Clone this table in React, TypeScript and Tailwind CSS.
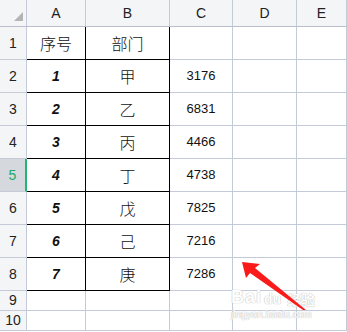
import React from 'react';

const cols = [
  { key: 'A', w: 'w-[59px]' },
  { key: 'B', w: 'w-[84px]' },
  { key: 'C', w: 'w-[63px]' },
  { key: 'D', w: 'w-[64px]' },
  { key: 'E', w: 'flex-1' },
];

const data = [
  ['序号', '部门', ''],
  ['1', '甲', '3176'],
  ['2', '乙', '6831'],
  ['3', '丙', '4466'],
  ['4', '丁', '4738'],
  ['5', '戊', '7825'],
  ['6', '己', '7216'],
  ['7', '庚', '7286'],
];

const grid = 'border-[#c5cad8]';

export default function App() {
  return (
    <div className="relative w-[347px] h-[332px] bg-white overflow-hidden font-['Liberation_Sans','Noto_Sans_CJK_SC',sans-serif] text-[#111]">
      {/* column headers */}
      <div className="flex h-[27px] bg-[#f4f5f7] border-b border-[#b9bfcd]">
        <div className={`w-[27px] border-r ${grid} relative`}>
          <div className="absolute left-[14px] top-[12px] w-0 h-0 border-l-[9px] border-l-transparent border-b-[9px] border-b-[#b4b4b4]" />
        </div>
        {cols.map(c => (
          <div key={c.key} className={`${c.w} border-r ${grid} flex items-center justify-center text-[14px] text-[#222] pt-[1px]`}>
            {c.key}
          </div>
        ))}
      </div>

      {/* data rows */}
      {Array.from({ length: 10 }).map((_, i) => {
        const row = data[i];
        const inTable = i < 8;
        const selected = i === 4;
        return (
          <div key={i} className={`flex ${inTable ? 'h-[33px]' : 'h-[20px]'}`}>
            <div
              className={`w-[27px] flex items-center justify-center text-[14px] border-b ${grid} ${
                selected
                  ? 'bg-[#d5d8dd] text-[#21a86a] border-r-2 border-r-[#21b573]'
                  : 'bg-[#f4f5f7] text-[#222] border-r'
              }`}
            >
              {i + 1}
            </div>
            <div
              className={`w-[59px] flex items-center justify-center ${
                inTable ? 'border-r border-b border-black' : `border-r border-b ${grid}`
              } ${i === 0 ? "text-[16px] font-['Noto_Sans_CJK_SC',sans-serif] font-light" : 'text-[14px] font-bold italic'}`}
            >
              {row ? row[0] : ''}
            </div>
            <div
              className={`w-[84px] flex items-center justify-center text-[16px] font-['Noto_Sans_CJK_SC',sans-serif] font-light ${
                inTable ? 'border-r border-b border-black' : `border-r border-b ${grid}`
              }`}
            >
              {row ? row[1] : ''}
            </div>
            <div className={`w-[63px] flex items-center justify-center text-[13px] border-r border-b ${grid}`}>
              {row ? row[2] : ''}
            </div>
            <div className={`w-[64px] border-r border-b ${grid}`} />
            <div className={`flex-1 border-r border-b ${grid}`} />
          </div>
        );
      })}

      {/* watermark */}
      <div className="absolute left-[231px] top-[288px] text-white font-['Liberation_Sans',sans-serif] font-bold leading-none [text-shadow:0_0_1px_#bdbdbd,0_0_1px_#bdbdbd]">
        <div className="flex items-end">
          <span className="text-[18px] tracking-[1px]">Bai</span>
          <span className="text-[14px] ml-[2px]">du</span>
          <span className="text-[14px] font-['Noto_Sans_CJK_SC',sans-serif] ml-[6px]">经验</span>
        </div>
        <div className="text-[10px] font-normal mt-[4px]">jingyan.baidu.com</div>
      </div>

      {/* arrow */}
      <svg className="absolute left-0 top-0" width="347" height="332" viewBox="0 0 347 332">
        <polygon
          points="242,262 260,264 255,268 306,310 303,310 250,273 246,278"
          fill="#fa1a1a"
        />
      </svg>
    </div>
  );
}
